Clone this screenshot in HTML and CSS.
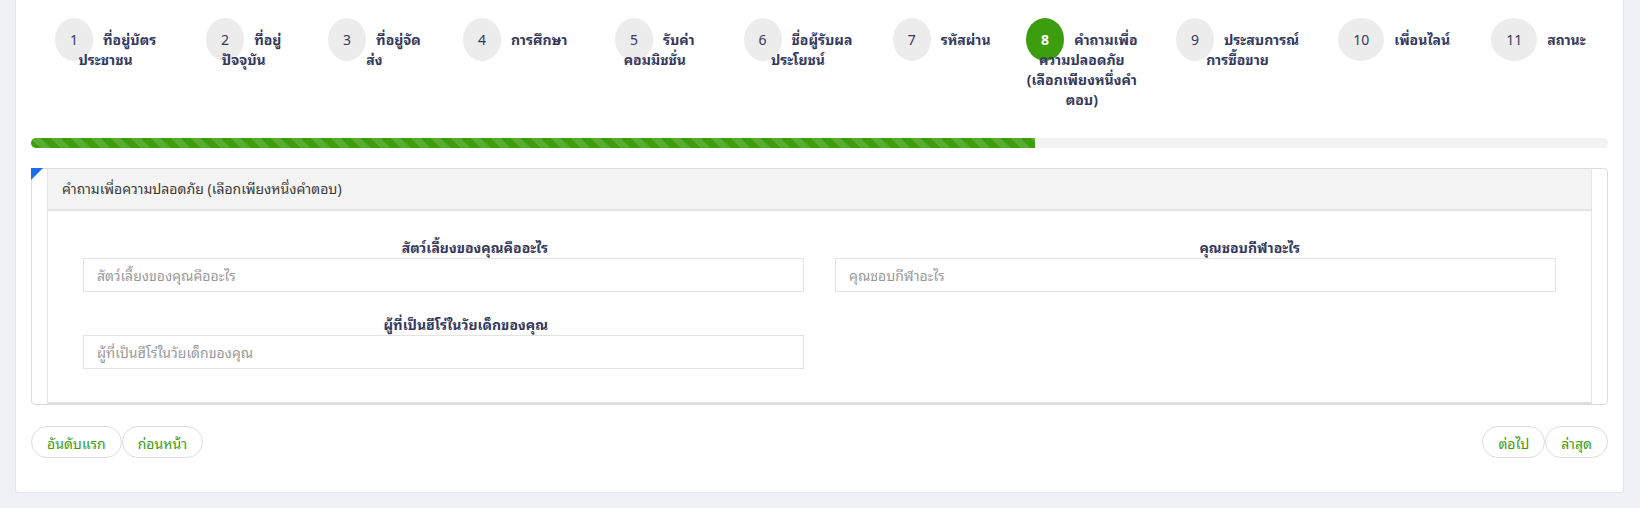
FILE: index.html
```html
<!DOCTYPE html>
<html lang="th">
<head>
    <meta charset="UTF-8">
    <meta name="viewport" content="width=device-width, initial-scale=1.0">
    <title>ลงทะเบียนสมาชิก</title>
    <link rel="stylesheet" href="styles.css">
</head>
<body>

    <div class="card">

        <!-- ขั้นตอน -->
        <div class="steps">
            <div class="step"><span class="step-num">1</span><span class="step-label">ที่อยู่บัตร<br>ประชาชน</span></div>
            <div class="step"><span class="step-num">2</span><span class="step-label">ที่อยู่<br>ปัจจุบัน</span></div>
            <div class="step"><span class="step-num">3</span><span class="step-label">ที่อยู่จัด<br>ส่ง</span></div>
            <div class="step"><span class="step-num">4</span><span class="step-label">การศึกษา</span></div>
            <div class="step"><span class="step-num">5</span><span class="step-label">รับค่า<br>คอมมิชชั่น</span></div>
            <div class="step"><span class="step-num">6</span><span class="step-label">ชื่อผู้รับผล<br>ประโยชน์</span></div>
            <div class="step"><span class="step-num">7</span><span class="step-label">รหัสผ่าน</span></div>
            <div class="step active"><span class="step-num">8</span><span class="step-label">คำถามเพื่อ<br>ความปลอดภัย<br>(เลือกเพียงหนึ่งคำ<br>ตอบ)</span></div>
            <div class="step"><span class="step-num">9</span><span class="step-label">ประสบการณ์<br>การซื้อขาย</span></div>
            <div class="step"><span class="step-num">10</span><span class="step-label">เพื่อนไลน์</span></div>
            <div class="step"><span class="step-num">11</span><span class="step-label">สถานะ</span></div>
        </div>

        <!-- แถบความคืบหน้า -->
        <div class="progress">
            <div class="progress-bar" style="width: 63.64%"></div>
        </div>

        <!-- คำถาม -->
        <div class="panel">
            <div class="panel-box">
                <div class="panel-head">คำถามเพื่อความปลอดภัย (เลือกเพียงหนึ่งคำตอบ)</div>
                <div class="panel-body">
                    <div class="form-group">
                        <label class="form-label">สัตว์เลี้ยงของคุณคืออะไร</label>
                        <input class="form-input" type="text" placeholder="สัตว์เลี้ยงของคุณคืออะไร">
                    </div>
                    <div class="form-group">
                        <label class="form-label">คุณชอบกีฬาอะไร</label>
                        <input class="form-input" type="text" placeholder="คุณชอบกีฬาอะไร">
                    </div>
                    <div class="form-group">
                        <label class="form-label">ผู้ที่เป็นฮีโร่ในวัยเด็กของคุณ</label>
                        <input class="form-input" type="text" placeholder="ผู้ที่เป็นฮีโร่ในวัยเด็กของคุณ">
                    </div>
                </div>
            </div>
        </div>

        <!-- ปุ่ม -->
        <div class="pager">
            <div class="pager-group">
                <button class="pager-btn">อันดับแรก</button>
                <button class="pager-btn">ก่อนหน้า</button>
            </div>
            <div class="pager-group">
                <button class="pager-btn">ต่อไป</button>
                <button class="pager-btn">ล่าสุด</button>
            </div>
        </div>

    </div>

</body>
</html>
```

FILE: styles.css
```css
body {
    margin: 0;
    padding: 0 16px 0 15px;
    background-color: #eff1f6;
    font-family: "Noto Sans", "Noto Sans Thai Looped", Loma, Garuda, "Noto Sans Thai", sans-serif;
    color: #34395e;
}
/* การ์ดหลัก */
.card {
    background-color: #fff;
    border: 1px solid #e3e6ee;
    border-top: none;
    border-radius: 0 0 3px 3px;
    padding: 30px 15px 34px;
}
/* ขั้นตอน */
.steps {
    display: grid;
    grid-template-columns: 149fr 127fr 134fr 147fr 132fr 154fr 133fr 147fr 164fr 149fr 139fr;
    height: 80px;
    margin-bottom: 28px;
}
.step {
    text-align: center;
    white-space: nowrap;
    font-size: 14px;
    font-weight: 700;
    line-height: 20px;
}
.step-num {
    display: inline;
    padding: 12px 15px;
    margin-right: 10px;
    border-radius: 50%;
    background-color: #ececec;
    font-weight: 400;
}
.step.active .step-num {
    background-color: #3c9d0e;
    color: #fff;
    font-weight: 700;
}
/* แถบความคืบหน้า */
.progress {
    height: 10px;
    background-color: #f2f2f2;
    border-radius: 5px;
    overflow: hidden;
    margin-bottom: 20px;
}
.progress-bar {
    height: 100%;
    background-color: #3c9d0e;
    background-image: linear-gradient(45deg, rgba(255, 255, 255, 0.15) 25%, transparent 25%, transparent 50%, rgba(255, 255, 255, 0.15) 50%, rgba(255, 255, 255, 0.15) 75%, transparent 75%, transparent);
    background-size: 20px 20px;
}
/* กล่องคำถาม */
.panel {
    position: relative;
    border: 1px solid #dcdcdc;
    border-radius: 4px;
    padding: 0 15px;
}
.panel::before {
    content: "";
    position: absolute;
    top: -1px;
    left: -1px;
    border-top: 12px solid #1a6df0;
    border-right: 12px solid transparent;
}
.panel-box {
    border: 1px solid #e6e6e6;
    border-top: none;
    border-bottom: 2px solid #dedede;
}
.panel-head {
    height: 40px;
    line-height: 40px;
    padding-left: 14px;
    background-color: #f4f4f4;
    border-bottom: 2px solid #e4e4e4;
    font-size: 14px;
    color: #3a3a3a;
}
.panel-body {
    display: grid;
    grid-template-columns: 1fr 1fr;
    column-gap: 31px;
    padding: 27px 35px 10px;
}
.form-group {
    margin-bottom: 23px;
}
.form-label {
    display: block;
    width: 64.5%;
    text-align: right;
    font-size: 14px;
    font-weight: 700;
    line-height: 20px;
}
.form-input {
    display: block;
    box-sizing: border-box;
    width: 100%;
    height: 34px;
    padding: 0 13px;
    border: 1px solid #e3e3e3;
    background-color: #fff;
    font-family: inherit;
    font-size: 14px;
    color: #333;
}
.form-input::placeholder {
    color: #9a9a9a;
}
/* ปุ่มเปลี่ยนหน้า */
.pager {
    display: flex;
    justify-content: space-between;
    margin-top: 21px;
}
.pager-group {
    display: flex;
}
.pager-btn {
    height: 32px;
    padding: 0 15px;
    border: 1px solid #dedede;
    border-radius: 16px;
    background-color: #fff;
    color: #3c9d0e;
    font-family: inherit;
    font-size: 14px;
    cursor: pointer;
}
```
